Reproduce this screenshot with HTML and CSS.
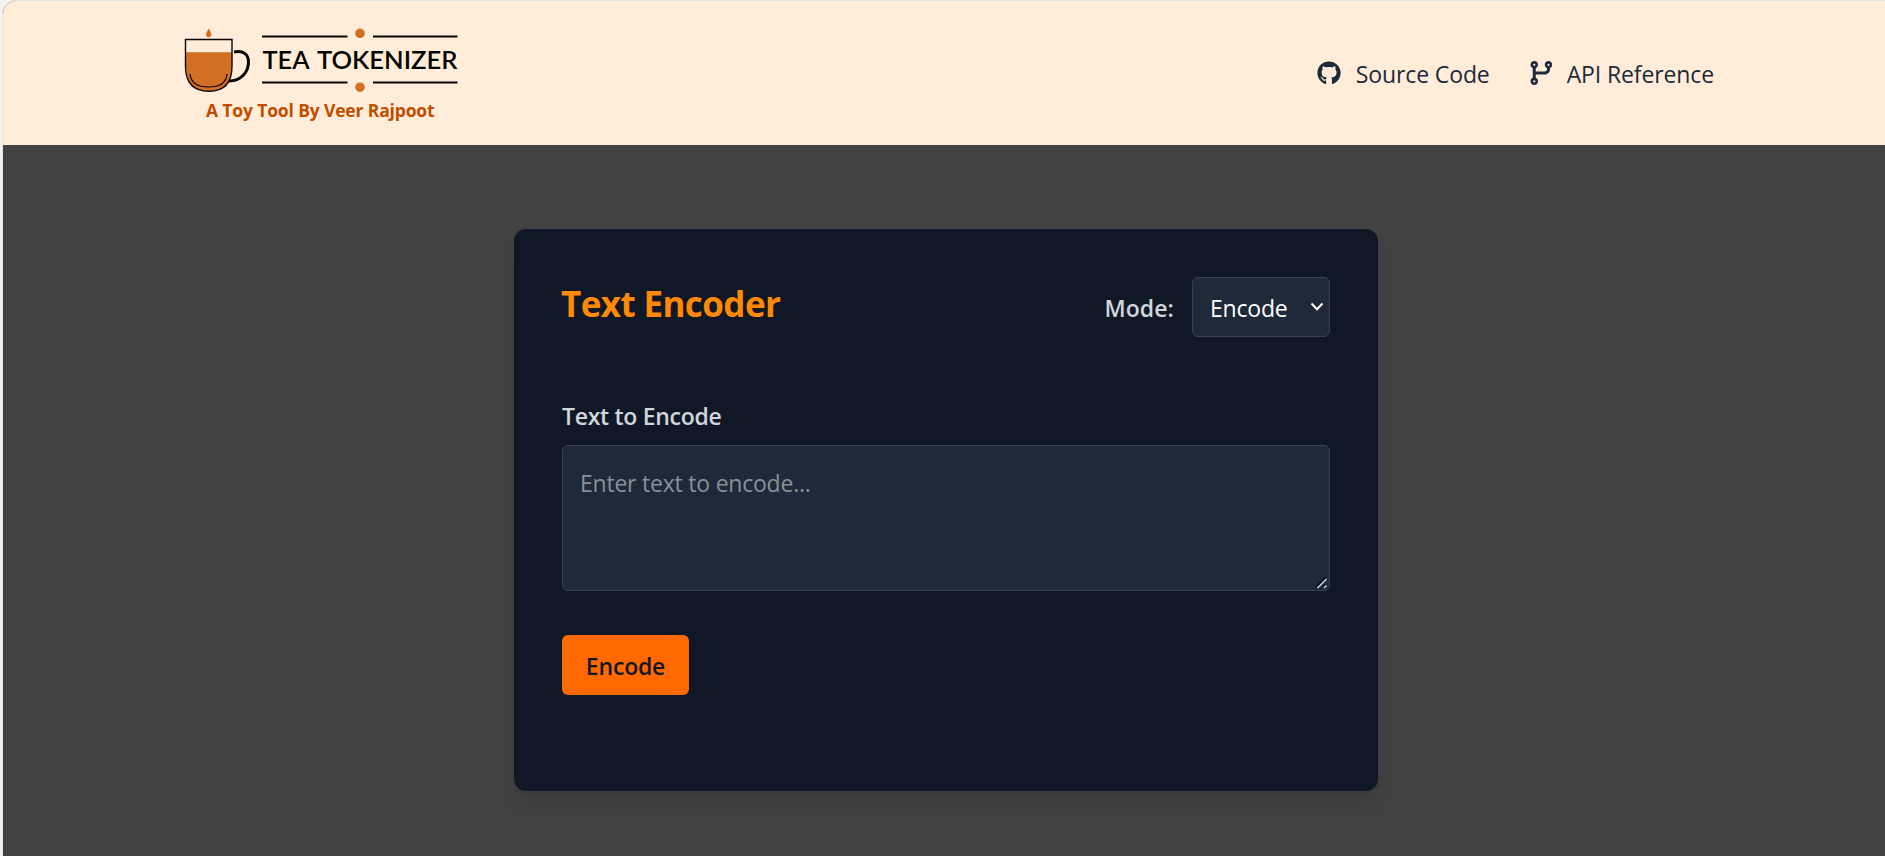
FILE: index.html
```html
<!DOCTYPE html>
<html lang="en">
<head>
<meta charset="utf-8">
<title>Tea Tokenizer</title>
<link rel="stylesheet" href="styles.css">
</head>
<body>
<div class="app">
  <header class="header">
    <a class="brand">
      <svg class="logo" width="280" height="66" viewBox="182 27 280 66" role="img" aria-label="Tea Tokenizer">
        <path d="M208.700 28.500C207.300 31 206 33 206 34.700C206 36.300 207.200 37.200 208.700 37.200S211.400 36.300 211.400 34.700C211.400 33 210.100 31 208.700 28.500Z" fill="#d26f22"/>
        <path d="M234 52C244 50 248.500 55 248.500 62C248.500 72 241 81 229 81" fill="none" stroke="#080604" stroke-width="3"/>
        <path d="M186 52.300H232C232.300 75 232 91 209 91S185.600 75 186 52.300Z" fill="#d26f22"/>
        <path d="M185.500 39.500H232V66C232 82 225 91.300 209 91.300S185.500 82 185.500 66Z" fill="none" stroke="#080604" stroke-width="1.400"/>
        <path d="M190 74C191 84 199 87 209 87S226 84 227 74" fill="none" stroke="#080604" stroke-width="1.200"/>
        <path d="M262 36.500H347.500M373 36.500H457.500M262 82.500H347.500M373 82.500H457.500" stroke="#080604" stroke-width="2"/>
        <circle cx="360" cy="33.400" r="4.800" fill="#d26f22"/>
        <circle cx="360" cy="87.200" r="4.800" fill="#d26f22"/>
        <text class="logo-text" x="262.500" y="69.300" textLength="47" lengthAdjust="spacingAndGlyphs">TEA</text>
        <text class="logo-text" x="317" y="69.300" textLength="140.500" lengthAdjust="spacingAndGlyphs">TOKENIZER</text>
      </svg>
      <span class="tagline">A Toy Tool By Veer Rajpoot</span>
    </a>
    <nav class="nav">
      <a class="nav-link">
        <svg width="24" height="24" viewBox="0 0 496 512" fill="currentColor" aria-hidden="true"><path d="M165.900 397.400c0 2-2.300 3.600-5.200 3.600-3.300.3-5.600-1.300-5.600-3.600 0-2 2.300-3.600 5.200-3.600 3-.3 5.600 1.300 5.600 3.600zm-31.100-4.500c-.7 2 1.300 4.300 4.300 4.900 2.600 1 5.600 0 6.200-2s-1.300-4.300-4.300-5.200c-2.600-.7-5.500.3-6.200 2.300zm44.200-1.700c-2.900.7-4.900 2.600-4.600 4.900.3 2 2.900 3.300 5.900 2.600 2.900-.7 4.900-2.600 4.600-4.600-.3-1.900-3-3.200-5.900-2.900zM244.800 8C106.100 8 0 113.300 0 252c0 110.900 69.800 205.800 169.500 239.200 12.800 2.300 17.300-5.600 17.300-12.100 0-6.200-.3-40.400-.3-61.400 0 0-70 15-84.700-29.800 0 0-11.400-29.100-27.800-36.600 0 0-22.900-15.700 1.600-15.400 0 0 24.900 2 38.600 25.800 21.900 38.600 58.600 27.500 72.900 20.900 2.300-16 8.800-27.100 16-33.700-55.900-6.200-112.300-14.300-112.300-110.500 0-27.500 7.600-41.300 23.600-58.900-2.600-6.500-11.100-33.300 2.600-67.900 20.900-6.500 69 27 69 27 20-5.600 41.500-8.500 62.800-8.500s42.800 2.900 62.800 8.500c0 0 48.100-33.600 69-27 13.700 34.700 5.200 61.400 2.600 67.900 16 17.700 25.800 31.500 25.800 58.900 0 96.500-58.900 104.200-114.800 110.500 9.200 7.900 17 22.900 17 46.400 0 33.700-.3 75.400-.3 83.600 0 6.500 4.600 14.400 17.300 12.100C428.200 457.800 496 362.900 496 252 496 113.300 383.500 8 244.800 8z"/></svg>
        <span>Source Code</span>
      </a>
      <a class="nav-link api">
        <svg width="22" height="24" viewBox="0 0 448 512" fill="currentColor" aria-hidden="true"><path d="M80 104a24 24 0 1 0 0-48 24 24 0 1 0 0 48zm80-24c0 32.800-19.700 61-48 73.300V224H304c26.500 0 48-21.500 48-48V153.300C323.700 141 304 112.800 304 80c0-44.200 35.800-80 80-80s80 35.800 80 80c0 32.800-19.700 61-48 73.300V176c0 61.900-50.100 112-112 112H112v70.700c28.300 12.300 48 40.500 48 73.300 0 44.200-35.800 80-80 80s-80-35.800-80-80c0-32.800 19.700-61 48-73.300V153.300C19.700 141 0 112.800 0 80 0 35.800 35.800 0 80 0s80 35.800 80 80zm224 24a24 24 0 1 0 0-48 24 24 0 1 0 0 48zM80 456a24 24 0 1 0 0-48 24 24 0 1 0 0 48z" fill-rule="evenodd"/></svg>
        <span>API Reference</span>
      </a>
    </nav>
  </header>
  <main class="main">
    <section class="card">
      <div class="card-head">
        <h1 class="title">Text Encoder</h1>
        <div class="mode">
          <label class="mode-label" for="mode">Mode:</label>
          <div class="select-wrap">
            <select class="select" id="mode"><option>Encode</option><option>Decode</option></select>
            <svg class="chevron" width="14" height="10" viewBox="0 0 14 10" aria-hidden="true"><path d="M1.500 1.500L7 7.200L12.500 1.500" fill="none" stroke="#fff" stroke-width="2"/></svg>
          </div>
        </div>
      </div>
      <label class="field-label" for="text">Text to Encode</label>
      <div class="textarea-wrap">
        <textarea class="textarea" id="text" placeholder="Enter text to encode..."></textarea>
        <svg class="grip" width="12" height="12" viewBox="0 0 12 12" aria-hidden="true"><path d="M0.500 10L9.500 1M7 10L9.500 7.500" stroke="#080c14" stroke-width="2"/><path d="M1.500 11L10.500 2M8 11L10.500 8.500" stroke="#c9ccd0" stroke-width="1.700"/></svg>
      </div>
      <button class="button">Encode</button>
    </section>
  </main>
</div>
</body>
</html>
```
FILE: styles.css
```css
* { box-sizing: border-box; }
body {
  margin: 0;
  background: #f3f3f3;
  font-family: "Segoe UI", "Open Sans", "Noto Sans", sans-serif;
  font-size: 23px;
  overflow: hidden;
}
.app {
  height: 856px;
  margin-left: 2px;
  border-left: 1px solid #e5e5e5;
  border-top: 1px solid #e5e5e5;
  border-top-left-radius: 14px;
  background: #424242;
  overflow: hidden;
}
.header {
  height: 144px;
  padding: 26px 171px 0 179px;
  display: flex;
  justify-content: space-between;
  background: #ffedd9;
}
.brand { display: flex; flex-direction: column; width: 280px; }
.logo { display: block; }
.logo-text { font-family: Lato, sans-serif; font-size: 24.500px; font-weight: 600; fill: #080604; }
.tagline {
  margin-left: 24px;
  font-size: 17.500px;
  line-height: 34px;
  font-weight: 700;
  letter-spacing: -0.150px;
  color: #bf4d00;
  white-space: nowrap;
}
.nav { display: flex; align-items: center; height: 92px; gap: 40px; }
.nav-link {
  display: flex;
  align-items: center;
  gap: 15px;
  color: #1e2939;
  letter-spacing: -0.120px;
  white-space: nowrap;
}
.nav-link span { padding-top: 2px; }
.main { padding-top: 84px; }
.card {
  width: 864px;
  height: 562px;
  margin-left: 511px;
  padding: 48px;
  border-radius: 12px;
  background: #101828;
  box-shadow: 0 15px 22px -4px rgba(0,0,0,.1), 0 6px 9px -6px rgba(0,0,0,.1);
}
.card-head { display: flex; justify-content: space-between; height: 60px; }
.title {
  margin: 0 0 0 -1px;
  font-size: 35px;
  line-height: 53px;
  font-weight: 700;
  letter-spacing: -0.600px;
  color: #ff8904;
}
.mode { display: flex; align-items: center; gap: 18px; }
.mode-label, .field-label { color: #d1d5dc; font-weight: 600; letter-spacing: -0.300px; }
.mode-label { padding-top: 2px; letter-spacing: 0.100px; }
.select-wrap { position: relative; width: 138px; height: 60px; }
.select {
  width: 138px;
  height: 60px;
  padding: 2px 17px 0;
  border: 1px solid #364153;
  border-radius: 6px;
  background: #1e2939;
  color: #fff;
  font: inherit;
  letter-spacing: -0.200px;
  appearance: none;
}
.chevron { position: absolute; right: 6px; top: 25px; }
.field-label { display: block; height: 36px; margin-top: 60px; line-height: 38px; }
.textarea-wrap { position: relative; margin-top: 12px; }
.textarea {
  display: block;
  width: 768px;
  height: 146px;
  padding: 19px 17px;
  border: 1px solid #364153;
  border-radius: 6px;
  background: #1e2939;
  color: #fff;
  font: inherit;
  line-height: 36px;
  letter-spacing: -0.220px;
  resize: none;
}
.textarea::placeholder { color: #8a9097; }
.grip { position: absolute; right: 2px; bottom: 2px; }
.button {
  display: block;
  width: 127px;
  height: 60px;
  margin-top: 44px;
  padding: 2px 0 0;
  border: 0;
  border-radius: 6px;
  background: #ff6900;
  color: #101828;
  font: inherit;
  font-weight: 600;
  letter-spacing: -0.200px;
}
```
